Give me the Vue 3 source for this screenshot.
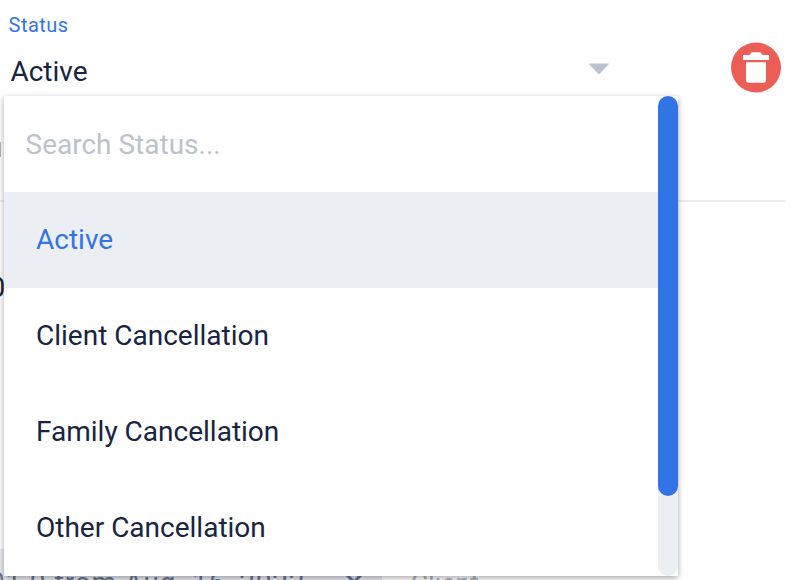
<script setup>
const options = ['Active', 'Client Cancellation', 'Family Cancellation', 'Other Cancellation']
const selected = 'Active'
</script>

<template>
  <main class="page">
    <section class="field-row">
      <div class="field">
        <label class="label">Status</label>
        <div class="value">
          <span>{{ selected }}</span>
          <svg class="caret" width="22" height="12" viewBox="0 0 22 12"><path d="M0.5 0.5H21.5L11 11.5Z" fill="#bcc2cc" /></svg>
        </div>
      </div>
      <button class="delete" aria-label="Delete">
        <svg width="50" height="51" viewBox="0 0 50 51">
          <circle cx="25" cy="25.5" r="25" fill="#ec5e55" />
          <path d="M12 13H18.5L20.5 10.3H29.5L31.5 13H38V18H12ZM15 20.3H35V37.5Q35 40.7 32 40.7H18Q15 40.7 15 37.5Z" fill="#fff" />
        </svg>
      </button>
    </section>
    <div class="behind-label"><i></i></div>
    <div class="behind-number">0</div>
    <div class="behind-bottom">
      <div class="chip"><span class="chip-text">01 0 from Aug. 16, 2022</span>
        <svg class="close" width="18" height="18" viewBox="0 0 18 18"><path d="M1 1L17 17M17 1L1 17" stroke="#68738c" stroke-width="3" /></svg>
      </div>
      <span class="client">Client</span>
    </div>
    <div class="menu">
      <div class="list">
        <div class="search">Search Status...</div>
        <div v-for="o in options" :key="o" class="option" :class="{ selected: o === selected }">{{ o }}</div>
      </div>
      <div class="track"><div class="thumb"></div></div>
    </div>
  </main>
</template>

<style>
body { background: #fff; overflow: hidden; }
</style>
<style scoped>
.page { position: relative; width: 804px; height: 580px; overflow: hidden; font-family: Roboto, sans-serif; font-size: 28px; color: #172442; display: flex; flex-direction: column; }
.field-row { display: flex; width: 786px; border-bottom: 2px solid #ebedf3; box-sizing: border-box; height: 202px; flex: none; justify-content: space-between; }
.field { width: 610px; padding-top: 12px; }
.label { display: block; font-size: 20px; line-height: 26px; padding-left: 8.5px; letter-spacing: .5px; color: #3273e8; }
.value { display: flex; justify-content: space-between; align-items: center; height: 68px; padding-left: 10.4px; line-height: 32px; }
.caret { margin-top: -6px; }
.delete { border: 0; background: none; padding: 0; height: 51px; width: 50px; margin: 42px 5px 0 0; }
.delete svg { display: block; }
.behind-label { position: absolute; left: 0; top: 142px; }
.behind-label i { display: block; width: 1px; height: 15px; background: #a9b0c0; }
.behind-number { margin: 70px 0 0 -10.5px; line-height: 32px; height: 32px; }
.behind-bottom { display: flex; margin-top: 245px; height: 50px; flex: none; }
.chip { display: flex; width: 382px; height: 50px; background: #e7e9f0; color: #6a758e; white-space: nowrap; box-sizing: border-box; padding-top: 18px; }
.chip-text { margin-left: -11px; width: 356px; line-height: 32px; letter-spacing: .8px; }
.close { margin-top: 6px; flex: none; }
.client { margin-left: 29px; padding-top: 18px; font-size: 26px; line-height: 32px; letter-spacing: .3px; color: #aeb2bb; }
.menu { position: absolute; left: 4px; top: 96px; width: 674px; height: 480px; display: flex; background: #fff; box-shadow: 0 2px 6px rgba(0,0,0,.35); }
.list { width: 654px; }
.search, .option { height: 96px; line-height: 96px; padding-left: 32px; white-space: nowrap; }
.search { padding-left: 21.5px; line-height: 98px; color: #bcc2cc; }
.option.selected { background: #ebeef3; color: #3273e8; }
.track { width: 20px; background: #ebeef3; border-radius: 10px; }
.thumb { height: 400px; background: #3273e8; border-radius: 10px; }
</style>
